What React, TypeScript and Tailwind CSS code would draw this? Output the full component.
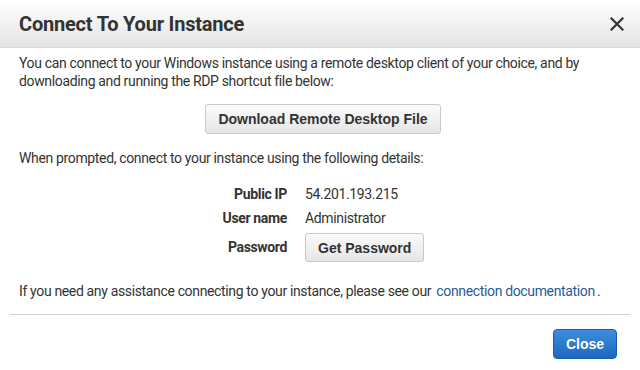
export default function App() {
  return (
    <div className="w-[640px] h-[370px] bg-white overflow-hidden text-[#333]" style={{ fontFamily: "Roboto, 'Liberation Sans', sans-serif" }}>
      {/* header */}
      <div className="h-[48px] flex items-center justify-between pl-[19px] pr-[16px] bg-gradient-to-b from-white to-[#e4e4e4] border-b border-[#d6d6d6]">
        <h1 className="text-[20px] font-bold text-[#333] tracking-[-0.2px]">Connect To Your Instance</h1>
        <svg width="14" height="14" viewBox="0 0 14 14" className="mt-[1px]">
          <path d="M1.5 1.5 L12.5 12.5 M12.5 1.5 L1.5 12.5" stroke="#333" strokeWidth="2.2" strokeLinecap="square" />
        </svg>
      </div>

      <div className="px-[19px] pt-[6px] text-[14px] leading-[18px] tracking-[-0.35px]">
        <p>
          You can connect to your Windows instance using a remote desktop client of your choice, and by
          <br />
          downloading and running the RDP shortcut file below:
        </p>

        <div className="flex justify-center mt-[14px] pl-[6px]">
          <button className="h-[30px] px-[12px] rounded-[3px] border border-[#c9c9c9] bg-gradient-to-b from-[#fafafa] to-[#e6e6e6] text-[14px] font-bold text-[#333] tracking-normal" style={{ fontFamily: "'Liberation Sans', Arial, sans-serif" }}>
            Download Remote Desktop File
          </button>
        </div>

        <p className="mt-[15px]">When prompted, connect to your instance using the following details:</p>

        <div className="grid grid-cols-[268px_1fr] gap-x-[18px] mt-[15px] items-center">
          <div className="text-right font-bold h-[24px] leading-[24px]">Public IP</div>
          <div className="h-[24px] leading-[24px]">54.201.193.215</div>
          <div className="text-right font-bold h-[24px] leading-[24px]">User name</div>
          <div className="h-[24px] leading-[24px]">Administrator</div>
          <div className="text-right font-bold self-start pt-[8px]">Password</div>
          <div className="pt-[3px]">
            <button className="h-[29px] px-[12px] rounded-[3px] border border-[#c9c9c9] bg-gradient-to-b from-[#fafafa] to-[#e6e6e6] text-[14px] font-bold text-[#333] tracking-normal" style={{ fontFamily: "'Liberation Sans', Arial, sans-serif" }}>
              Get Password
            </button>
          </div>
        </div>

        <p className="mt-[20px]">
          If you need any assistance connecting to your instance, please see our{" "}
          <a className="text-[#1f5b9e] ml-[2px]">connection documentation</a>
          <span className="ml-[2px]">.</span>
        </p>
      </div>

      <div className="mx-[10px] mt-[14px] border-t border-[#cfcfcf]" />

      <div className="flex justify-end pr-[23px] pt-[14px]">
        <button className="h-[30px] w-[64px] rounded-[4px] border border-[#1a5ea8] bg-gradient-to-b from-[#3d8ede] to-[#1d68bf] text-white text-[14px] font-bold" style={{ fontFamily: "'Liberation Sans', Arial, sans-serif" }}>
          Close
        </button>
      </div>
    </div>
  );
}
